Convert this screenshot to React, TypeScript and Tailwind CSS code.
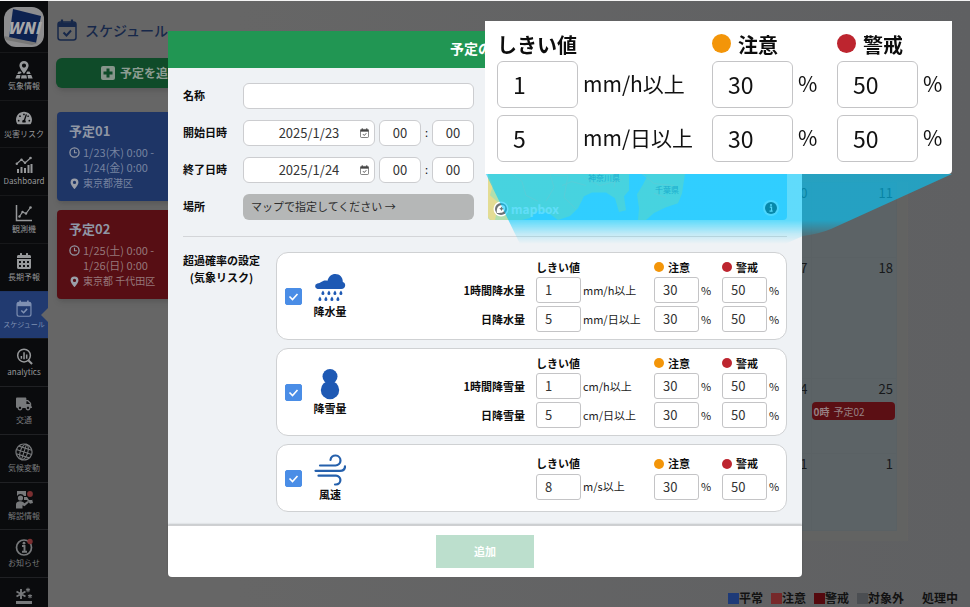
import { useState } from "react";
import type { ReactNode } from "react";
import { FaCalendarAlt, FaTachometerAlt, FaTruck } from "react-icons/fa";

const PinMapIcon = () => (
  <svg viewBox="0 0 18 18" className="size-[18px]" fill="currentColor">
    <path
      fillRule="evenodd"
      d="M9 0a4.6 4.6 0 0 1 4.6 4.6C13.600 7.600 9 13 9 13S4.400 7.600 4.400 4.600A4.600 4.600 0 0 1 9 0zm0 2.500a2.100 2.100 0 1 0 0 4.200 2.100 2.100 0 0 0 0-4.200z"
    />
    <path d="M3.500 10.500h2.200l1 1.500-2.500 1H2.300zM12.300 10.500h2.200l1.200 2.500H12l-.8-.8zM1.700 14h3.800l-.6 3.500H.3zM6.600 14.300h4.800l.6 3.200H6zM12.500 14h3.800l1.400 3.500h-4.600z" />
  </svg>
);

const BarsLineIcon = () => (
  <svg viewBox="0 0 18 18" className="size-[18px]" fill="none" stroke="currentColor">
    <path d="M3 17v-4M6.500 17v-6M10 17v-5M13.500 17V9M16.500 17V8" strokeWidth="2" />
    <path d="M1.500 8l5-4.500L10 7l5.500-5" strokeWidth="1.100" />
    <g fill="currentColor" stroke="none">
      <circle cx="1.800" cy="7.800" r="1.200" />
      <circle cx="6.500" cy="3.800" r="1.200" />
      <circle cx="10" cy="6.800" r="1.200" />
      <circle cx="15.500" cy="2" r="1.300" />
    </g>
  </svg>
);

const AxesIcon = () => (
  <svg viewBox="0 0 18 18" className="size-[18px]" fill="none" stroke="currentColor">
    <path d="M1.500 1v15.500H17" strokeWidth="1.500" />
    <path d="M4.500 12.500L7.500 8l3.500 1.500 4.500-6" strokeWidth="1.200" />
    <g fill="currentColor" stroke="none">
      <circle cx="4.500" cy="12.500" r="1.200" />
      <circle cx="7.500" cy="8" r="1.200" />
      <circle cx="11" cy="9.500" r="1.200" />
      <circle cx="15.500" cy="3.500" r="1.300" />
    </g>
  </svg>
);

const CalendarCheckIcon = ({ className }: { className: string }) => (
  <svg viewBox="0 0 20 22" className={className} fill="none" stroke="currentColor">
    <rect x="1" y="3" width="18" height="18" rx="2.500" strokeWidth="1.500" />
    <path d="M1 3.500h18V8H1z" fill="currentColor" stroke="none" />
    <path d="M5 .5v4M15 .5v4" strokeWidth="2.200" />
    <path d="M6.500 13.500l3 3 4.500-5" strokeWidth="2" />
  </svg>
);

const AnalyticsIcon = () => (
  <svg viewBox="0 0 18 18" className="size-[17px]" fill="none" stroke="currentColor">
    <circle cx="8.500" cy="8" r="6.700" strokeWidth="1.600" />
    <path d="M13 13l4 4" strokeWidth="2.200" />
    <path d="M5.700 11.500v-3M8.500 12V4.500M11.300 11.500V7" strokeWidth="1.600" />
  </svg>
);

const GlobeIcon = () => (
  <svg viewBox="0 0 18 18" className="size-[18px]" fill="none" stroke="currentColor">
    <g transform="rotate(18 9 9)">
      <circle cx="9" cy="9" r="8" strokeWidth="1.200" />
      <ellipse cx="9" cy="9" rx="3.800" ry="8" strokeWidth="1.100" />
      <path d="M9 1v16M1 9h16M2.300 5h13.400M2.300 13h13.400" strokeWidth="1.100" />
    </g>
  </svg>
);

const CommentaryIcon = () => (
  <svg viewBox="0 0 18 18" className="size-[18px]" fill="currentColor">
    <path d="M2 0h9v5H9a4 4 0 0 0-7 0z" />
    <circle cx="5.500" cy="7" r="2.600" />
    <path d="M1 17.500V14c0-3 2-3.700 4.500-3.700 2 0 3 1 4 2l3-2.300 1.300 1.500-4.300 3.700-2-1v3.300zM9 6h3l2 3h3V8l1 4-3 .8-3-3.800H9z" />
    <circle cx="15" cy="3" r="2.900" fill="#7b2f31" />
  </svg>
);

const NoticeIcon = () => (
  <svg viewBox="0 0 18 18" className="size-[18px]" fill="none" stroke="currentColor">
    <circle cx="9" cy="9.500" r="7.500" strokeWidth="1.700" />
    <path d="M7 8h2.500v5.500M7 13.800h5" strokeWidth="1.900" />
    <circle cx="9" cy="5.200" r="1.400" fill="currentColor" stroke="none" />
    <circle cx="15" cy="3.500" r="2.700" fill="#7b2f31" stroke="none" />
  </svg>
);

const SnowIcon = () => (
  <svg viewBox="0 0 18 18" className="size-[18px]" fill="none" stroke="currentColor">
    <path d="M6 2v10M1.500 4.500l9 5M10.500 4.500l-9 5" strokeWidth="1.900" />
    <path d="M13 .8v4.400M11 2l4 2M15 2l-4 2M15 7.300v4M13 8.300l4 2M17 8.300l-4 2" strokeWidth="1.100" />
    <path d="M1 15.500h16" strokeWidth="3" />
  </svg>
);

const navItems: { label: string; icon: ReactNode; active?: boolean; dim?: boolean }[] = [
  { label: "気象情報", icon: <PinMapIcon /> },
  { label: "災害リスク", icon: <FaTachometerAlt className="size-4" /> },
  { label: "Dashboard", icon: <BarsLineIcon /> },
  { label: "観測機", icon: <AxesIcon /> },
  { label: "長期予報", icon: <FaCalendarAlt className="size-4" /> },
  { label: "スケジュール", icon: <CalendarCheckIcon className="h-[17px] w-4" />, active: true },
  { label: "analytics", icon: <AnalyticsIcon /> },
  { label: "交通", icon: <FaTruck className="size-4" />, dim: true },
  { label: "気候変動", icon: <GlobeIcon />, dim: true },
  { label: "解説情報", icon: <CommentaryIcon />, dim: true },
  { label: "お知らせ", icon: <NoticeIcon />, dim: true },
];

function Sidebar() {
  return (
    <nav className="flex h-full w-12 shrink-0 flex-col bg-[#0a0b0d]">
      <a href="#top" aria-label="WNI" className="flex h-[51px] items-center justify-center">
        <span className="relative flex size-10 items-center justify-center overflow-hidden rounded-xl bg-[#8d8d8f]">
          <svg viewBox="0 0 40 40" className="absolute inset-0 size-full">
            <path d="M9 2l28 7-5 27-27-5z" fill="#0d2250" />
            <path d="M0 29l34 7-6 2L2 33z" fill="#777" />
          </svg>
          <span className="relative text-[16px] leading-none font-black italic text-[#a6a6a8]">WNI</span>
        </span>
      </a>
      {navItems.map((item) => (
        <a
          key={item.label}
          href="#nav"
          className={`relative flex flex-1 flex-col items-center gap-[1px] border-t pt-2 ${
            item.active
              ? "border-[#1f3668] bg-[#213a70] text-[#7f90b2]"
              : item.dim
                ? "border-[#202124] text-[#77797b]"
                : "border-[#17181a] text-[#96989a]"
          }`}
        >
          <span className="flex h-[18px] items-center">{item.icon}</span>
          <span className={`whitespace-nowrap leading-[11px] ${item.active ? "text-[7px]" : "text-[8px]"}`}>
            {item.label}
          </span>
          {item.active && (
            <svg viewBox="0 0 7 14" className="absolute top-4 right-0 h-[14px] w-[7px]">
              <path d="M7 0v14L0 7z" fill="#666" />
            </svg>
          )}
        </a>
      ))}
      <a
        href="#nav"
        aria-label="Snow"
        className="flex h-[30px] shrink-0 justify-center overflow-hidden border-t border-[#202124] pt-[9px] text-[#77797b]"
      >
        <SnowIcon />
      </a>
    </nav>
  );
}

const plans = [
  { name: "予定01", from: "1/23(木) 0:00 -", to: "1/24(金) 0:00", place: "東京都港区", color: "bg-[#1e3566] text-[#7683a0]" },
  { name: "予定02", from: "1/25(土) 0:00 -", to: "1/26(日) 0:00", place: "東京都 千代田区", color: "bg-[#570e14] text-[#96787b]" },
];

function PlanList() {
  return (
    <aside className="w-[190px] shrink-0 px-2">
      <h1 className="flex h-[57px] items-center gap-2 pl-[1px] text-sm font-medium text-[#17284a]">
        <CalendarCheckIcon className="h-[22px] w-5" />
        スケジュール
      </h1>
      <button
        type="button"
        className="flex h-[30px] w-full items-center justify-center gap-1 rounded-md bg-[#0f4b29] pr-[6px] text-[12px] font-bold text-[#8c9c92] shadow-md"
      >
        <svg viewBox="0 0 16 16" className="size-4">
          <rect x="1" y="1" width="14" height="14" rx="2" fill="#87958b" />
          <path d="M8 3.500v9M3.500 8h9" stroke="#0f4b29" strokeWidth="3" />
        </svg>
        予定を追加
      </button>
      <ul className="mt-6 flex flex-col gap-[9px] pl-[1px]">
        {plans.map((plan) => (
          <li key={plan.name} className={`rounded px-3 pt-[9px] pb-[10px] shadow-md ${plan.color}`}>
            <h2 className="text-[13px] leading-5 font-bold text-[#8f96a4]">{plan.name}</h2>
            <div className="mt-1 flex gap-[3px] text-[11px] leading-[15px]">
              <svg viewBox="0 0 12 12" className="mt-[2px] size-[11px]" fill="none" stroke="#9297a3">
                <circle cx="6" cy="6" r="5" strokeWidth="1.400" />
                <path d="M6 3v3.200h2.600" strokeWidth="1.200" />
              </svg>
              <p>
                <span className="block">{plan.from}</span>
                <span className="block">{plan.to}</span>
              </p>
            </div>
            <div className="flex items-center gap-[3px] text-[10px] leading-4">
              <svg viewBox="0 0 12 12" className="size-[11px]" fill="#9a9ea8">
                <path
                  fillRule="evenodd"
                  d="M6 .5a4.300 4.300 0 0 1 4.300 4.300C10.300 7.500 6 12 6 12S1.700 7.500 1.700 4.800A4.300 4.300 0 0 1 6 .5zm0 2.500a1.800 1.800 0 1 0 0 3.600A1.800 1.800 0 0 0 6 3z"
                />
              </svg>
              {plan.place}
            </div>
          </li>
        ))}
      </ul>
    </aside>
  );
}

// Only Friday and Saturday stay clear of the dialog
const weeks = [
  { height: "h-[75px]", days: [10, 11] },
  { height: "h-[121px]", days: [17, 18] },
  { height: "h-[75px]", days: [24, 25] },
  { height: "h-[77px]", days: [31, 1] },
];

const legend = [
  { label: "平常", color: "bg-[#1e3a78]" },
  { label: "注意", color: "bg-[#76292a]" },
  { label: "警戒", color: "bg-[#55090e]" },
  { label: "対象外", color: "bg-[#4b4e52]" },
];

function Calendar() {
  return (
    <main className="flex min-w-0 flex-1 flex-col items-end bg-linear-to-r from-[#666] to-[#5f6062]">
      <div className="mt-[181px] mr-[62px] w-[610px] max-w-full border-r border-[#646362] bg-[#626362] pr-[10px] pb-[10px]">
        <table className="w-full table-fixed border-collapse bg-[#5c6366] text-[13px] text-[#16181a]">
          <tbody>
            {weeks.map((week, i) => (
              <tr key={i} className={week.height}>
                <td colSpan={5} />
                {week.days.map((day) => (
                  <td key={day} className="border border-[#5a6164] p-0 text-right align-top">
                    <span className="block pr-[3px] leading-5">{day}</span>
                    {day === 25 && (
                      <a
                        href="#plan"
                        className="mt-[3px] mr-[1px] flex h-[18px] items-center gap-1 rounded-sm bg-[#5b0f14] pl-[2px] text-[10px] text-[#968083]"
                      >
                        <b>0時</b>予定02
                      </a>
                    )}
                  </td>
                ))}
              </tr>
            ))}
          </tbody>
        </table>
      </div>
      <div className="mt-auto flex gap-2 pr-3 text-[12px] leading-[18px] font-bold text-[#121212]">
        {legend.map((item) => (
          <span key={item.label} className="flex items-center">
            <i className={`size-[11px] ${item.color}`} />
            {item.label}
          </span>
        ))}
        <span className="pl-[10px]">処理中</span>
      </div>
    </main>
  );
}

type Threshold = { label: string; value: string; unit: string };

const levels = [
  { name: "注意", dot: "bg-[#f39509]", value: "30" },
  { name: "警戒", dot: "bg-[#bd252f]", value: "50" },
];

function ThresholdGrid({ rows, large }: { rows: Threshold[]; large?: boolean }) {
  const field = large
    ? "h-[47px] rounded-md pb-[2px] pl-[15px] text-[23px] text-[#111]"
    : "h-[26px] rounded-[3px] pb-[1px] pl-2 text-[13px] text-[#333]";
  const unit = large ? "pb-[2px] pl-[5px] text-[21px] text-[#111]" : "pl-[2px] text-[11px] text-[#222]";
  const head = large ? "h-[26px] text-[20px]" : "h-[14px] text-[11px]";

  return (
    <div
      className={`grid items-center whitespace-nowrap ${
        large
          ? "grid-cols-[81px_134px_81px_44px_81px_34px] gap-y-[7px]"
          : "grid-cols-[auto_45px_73px_45px_23px_45px_19px] gap-y-[3px]"
      }`}
    >
      {!large && <span />}
      <b className={`col-span-2 flex items-center ${head} ${large ? "-mb-1" : ""}`}>しきい値</b>
      {levels.map((level) => (
        <b
          key={level.name}
          className={`col-span-2 flex items-center ${head} ${large ? "-mb-1 gap-[7px]" : "gap-1"}`}
        >
          <i className={`rounded-full ${level.dot} ${large ? "mb-1 size-[19px]" : "size-[10px]"}`} />
          {level.name}
        </b>
      ))}
      {rows.map((row) => (
        <div key={row.unit} className="contents">
          {!large && <b className="pr-[11px] text-right text-[11px]">{row.label}</b>}
          <input
            aria-label={`${row.label} しきい値`}
            defaultValue={row.value}
            className={`w-full min-w-0 border border-[#c4c4c6] bg-white ${field}`}
          />
          <span className={unit}>{row.unit}</span>
          {levels.map((level) => (
            <div key={level.name} className="contents">
              <input
                aria-label={`${row.label} ${level.name}`}
                defaultValue={level.value}
                className={`w-full min-w-0 border border-[#c4c4c6] bg-white ${field}`}
              />
              <span className={unit}>%</span>
            </div>
          ))}
        </div>
      ))}
    </div>
  );
}

const drops = [
  [8, 19], [14, 19], [20, 19], [26, 19],
  [5, 25], [11, 25], [17, 25], [23, 25],
];

const RainIcon = () => (
  <svg viewBox="0 0 32 30" className="h-[30px] w-8" fill="#1e59b4">
    <path d="M3.500 16a2.800 2.800 0 0 1-.2-5.500C5 10.200 6 9.800 7.200 9c1.800-1.700 4.300-2 6.300-1.200C14.500 3.600 17.500 1 21.300 1c4.500 0 7.700 3.500 7.500 8 1.700.5 2.400 1.800 2.400 3.300 0 2.100-1.700 3.700-3.900 3.700z" />
    {drops.map(([x, y]) => (
      <path key={`${x}-${y}`} d={`M${x + 1} ${y - 1.5}c1 1.600 1.400 2.200 1.400 3a1.500 1.500 0 0 1-3 0c0-.8.500-1.500 1.600-3z`} />
    ))}
  </svg>
);

const SnowmanIcon = () => (
  <svg viewBox="0 0 32 32" className="size-8" fill="#1e59b4">
    <circle cx="16" cy="8.500" r="7.500" />
    <circle cx="16" cy="22" r="9.200" />
  </svg>
);

const WindIcon = () => (
  <svg viewBox="0 0 32 32" className="size-8" fill="none" stroke="#2560ac" strokeWidth="2.200" strokeLinecap="round">
    <path d="M6 11.500h15.500a5 5 0 1 0-5-5.500" />
    <path d="M1.500 16.800h24.500c3.300 0 5-1.800 5-4.500" />
    <path d="M4.500 21.700h17.500a4.400 4.400 0 0 1 0 8.800h-1" />
  </svg>
);

const risks = [
  {
    id: "rain",
    name: "降水量",
    icon: <RainIcon />,
    rows: [
      { label: "1時間降水量", value: "1", unit: "mm/h以上" },
      { label: "日降水量", value: "5", unit: "mm/日以上" },
    ],
  },
  {
    id: "snow",
    name: "降雪量",
    icon: <SnowmanIcon />,
    rows: [
      { label: "1時間降雪量", value: "1", unit: "cm/h以上" },
      { label: "日降雪量", value: "5", unit: "cm/日以上" },
    ],
  },
  {
    id: "wind",
    name: "風速",
    icon: <WindIcon />,
    rows: [{ label: "", value: "8", unit: "m/s以上" }],
  },
];

function RiskCard({ risk }: { risk: (typeof risks)[number] }) {
  const [checked, setChecked] = useState(true);
  return (
    <div
      className={`flex items-center rounded-xl border border-[#cfd1d3] bg-white pl-2 ${
        risk.rows.length > 1 ? "py-[7px]" : "py-[9px]"
      }`}
    >
      <span className="relative size-[17px]">
        <input
          id={risk.id}
          type="checkbox"
          checked={checked}
          onChange={() => setChecked(!checked)}
          className="block size-full appearance-none rounded-[2px] border border-[#4a8de6] checked:bg-[#4a8de6]"
        />
        <svg viewBox="0 0 17 17" className="pointer-events-none absolute inset-0 size-full" fill="none">
          <path d="M4.500 8.500l3 3 5-5.500" stroke="#fff" strokeWidth="1.600" />
        </svg>
      </span>
      <label htmlFor={risk.id} className="ml-2 flex w-10 flex-col items-center text-[11px] leading-4 font-bold">
        {risk.icon}
        {risk.name}
      </label>
      <div className="ml-auto">
        <ThresholdGrid rows={risk.rows} />
      </div>
    </div>
  );
}

function DateRow({ id, label, date }: { id: string; label: string; date: string }) {
  const box = "h-[26px] rounded-md border border-[#cccdd0] bg-white pb-[2px] text-center text-[13px] text-[#333]";
  return (
    <>
      <label htmlFor={id} className="pb-[2px] font-bold">
        {label}
      </label>
      <div className="flex items-center">
        <div className="relative mr-1 min-w-0 flex-1">
          <input id={id} defaultValue={date} className={`block w-full ${box}`} />
          <button type="button" aria-label="カレンダー" className="absolute top-2 right-[6px] text-[#444]">
            <CalendarCheckIcon className="block h-[10px] w-[9px]" />
          </button>
        </div>
        <input aria-label={`${label} 時`} defaultValue="00" className={`w-[42px] ${box}`} />
        <span className="w-[11px] pb-[2px] text-center">:</span>
        <input aria-label={`${label} 分`} defaultValue="00" className={`w-[42px] ${box}`} />
      </div>
    </>
  );
}

function MapView() {
  return (
    <div className="relative flex-1 overflow-hidden rounded-sm bg-[#78d2ff]">
      <svg viewBox="0 0 299 139" preserveAspectRatio="none" className="absolute inset-0 size-full">
        <path
          d="M0 0h205l-8 92-3 20-4 10-12 4-12 6-8 7h-8l1-12-2-14 6-10 4-8-10-10-8 8v16l-5 6 2 14-7 2-4-14-9-6h-14l-8 4-6 12-8 8-12 4-8-6-12-4-8 8-8 2H0z"
          fill="#b1dfae"
        />
        <path d="M0 92l5 12-3 10 9 8-4 17H0z" fill="#e3dc93" />
        <path
          d="M24 92l10 8 4 14 12 6M62 92l4 14-8 14M74 104l10-4 14 4M96 96l16 8 22-6M154 92l12 10 20 2M166 112l12 4M66 94h14l-4 22 12 12M128 92l-2 14"
          fill="none"
          stroke="#d9d0a0"
        />
        <g fill="#497f83" fontSize="8">
          <text x="100" y="99">神奈川県</text>
          <text x="167" y="112">千葉県</text>
        </g>
      </svg>
      <div className="absolute bottom-[3px] left-[5px] flex items-center gap-[2px] text-[12px] leading-4 font-bold text-white/80">
        <svg viewBox="0 0 16 16" className="size-4">
          <circle cx="8" cy="8" r="7.500" fill="#fff" />
          <circle cx="8" cy="8" r="6" fill="#6c7375" />
          <path d="M4 12c-1-4 1-8 5-8 3 0 4 3 2.500 5.500S7 12 4 12z" fill="#fff" />
          <path d="M8.500 5.500l.8 1.500 1.500.8-1.500.8-.8 1.500-.8-1.500-1.500-.8 1.500-.8z" fill="#6c7375" />
        </svg>
        mapbox
      </div>
      <button
        type="button"
        aria-label="地図情報"
        className="absolute right-2 bottom-1 flex size-4 items-center justify-center rounded-full bg-white/50"
      >
        <svg viewBox="0 0 12 12" className="size-3">
          <circle cx="6" cy="6" r="6" fill="#12252b" />
          <path d="M4.800 5.200h1.700V9M4.500 9.200h3.200" stroke="#cfe9f0" strokeWidth="1.300" />
          <circle cx="6" cy="2.900" r="1" fill="#cfe9f0" />
        </svg>
      </button>
    </div>
  );
}

// Enlarged thresholds, with the light cone that points back to the form
function Magnifier() {
  return (
    <div className="absolute -top-[10px] left-1/2 w-[467px]">
      <div className="rounded-br-sm bg-white pt-[11px] pb-3 pl-3">
        <ThresholdGrid large rows={risks[0].rows} />
      </div>
      <svg viewBox="0 0 467 70" className="pointer-events-none block w-full">
        <defs>
          <linearGradient id="cone" x1="0" y1="0" x2="0" y2="1">
            <stop offset="0.660" stopColor="#00cbff" stopOpacity="0.600" />
            <stop offset="0.850" stopColor="#00cbff" stopOpacity="0.200" />
            <stop offset="1" stopColor="#00cbff" stopOpacity="0" />
          </linearGradient>
        </defs>
        <path d="M1 0h466L346 55Q334 60 318 62L300 70H35z" fill="url(#cone)" />
      </svg>
    </div>
  );
}

function PlanDialog() {
  return (
    <div className="fixed inset-0 flex items-start justify-center pt-[31px]">
      <section role="dialog" aria-labelledby="dialog-title" className="relative w-[634px] max-w-full text-[11px] text-[#0c0c0c]">
        <h2
          id="dialog-title"
          className="flex h-[37px] items-center justify-center bg-[#219653] pb-[2px] text-[14px] font-bold text-white"
        >
          予定の追加
        </h2>
        <div className="bg-[#eff2f5] px-[15px] pt-[15px] pb-[13px]">
          <div className="flex gap-[14px] border-b border-[#d3d5d8] pb-4">
            <div className="grid w-[291px] grid-cols-[60px_1fr] items-center gap-y-[11px]">
              <label htmlFor="name" className="pb-[2px] font-bold">
                名称
              </label>
              <input id="name" className="h-[26px] w-full rounded-md border border-[#cccdd0] bg-white px-2" />
              <DateRow id="start" label="開始日時" date="2025/1/23" />
              <DateRow id="end" label="終了日時" date="2025/1/24" />
              <label htmlFor="place" className="pb-[2px] font-bold">
                場所
              </label>
              <input
                id="place"
                readOnly
                value="マップで指定してください →"
                className="h-[26px] w-full rounded-md bg-[#b5b7b7] px-2 pb-[2px] text-[11px] text-[#2c2c2c]"
              />
            </div>
            <MapView />
          </div>
          <div className="flex pt-[15px]">
            <h3 className="w-[93px] leading-[17px] font-bold">
              <span className="inline-block text-center">
                超過確率の設定
                <br />
                (気象リスク)
              </span>
            </h3>
            <div className="flex min-w-0 flex-1 flex-col gap-2">
              {risks.map((risk) => (
                <RiskCard key={risk.id} risk={risk} />
              ))}
            </div>
          </div>
        </div>
        <footer className="relative flex h-[52px] items-center justify-center rounded-b-sm border-t border-[#cfd0d2] bg-white shadow-[0_-1px_2px_rgba(0,0,0,0.2)]">
          <button type="button" className="h-[33px] w-[98px] bg-[#bcdfcd] text-[11px] font-bold text-white">
            追加
          </button>
        </footer>
        <Magnifier />
      </section>
    </div>
  );
}

export default function App() {
  return (
    <div className="flex h-screen overflow-hidden border-t border-[#f4f4f4] bg-[#666] font-['Noto_Sans_CJK_JP',sans-serif]">
      <Sidebar />
      <PlanList />
      <Calendar />
      <PlanDialog />
    </div>
  );
}
